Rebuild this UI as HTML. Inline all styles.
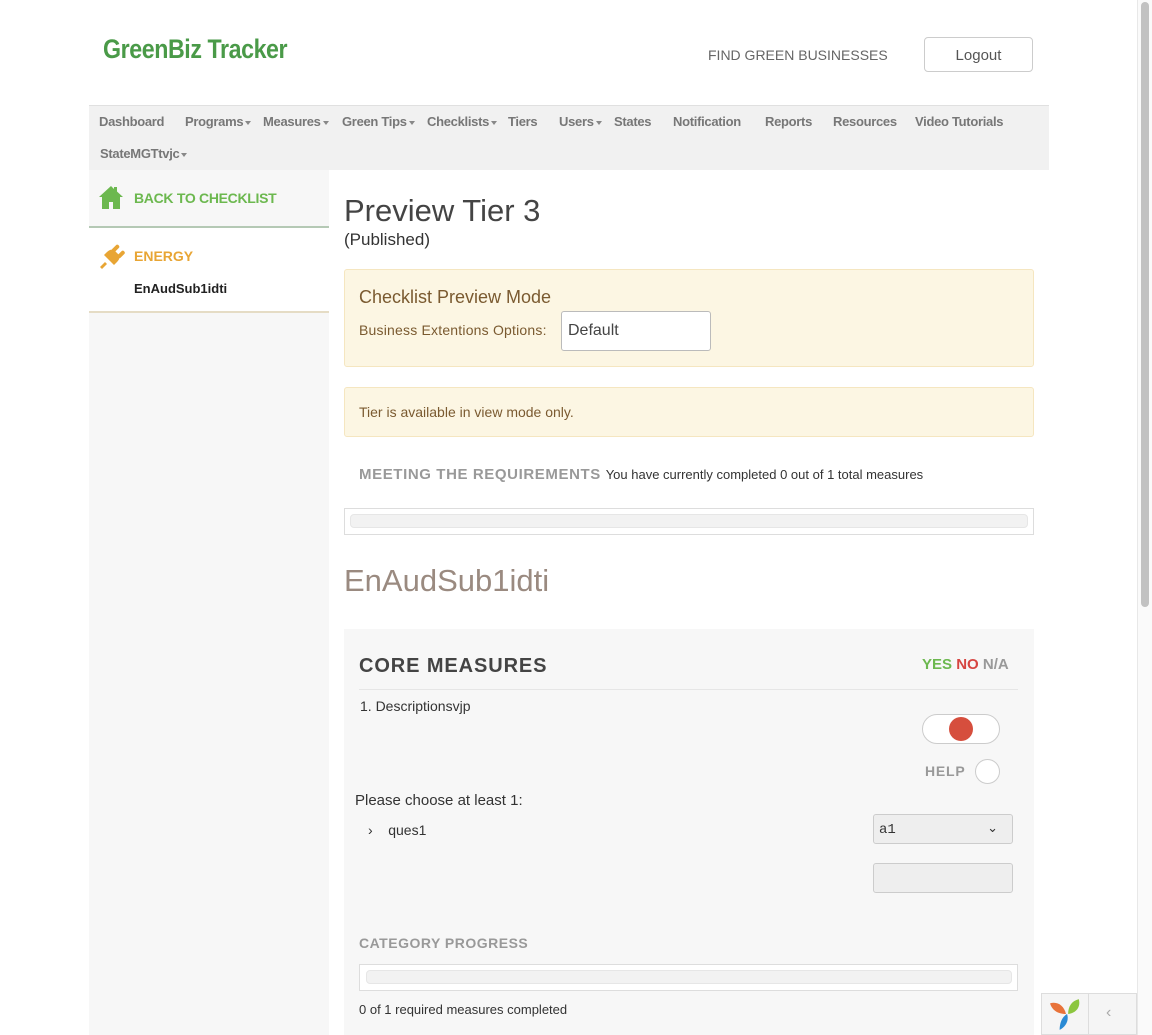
<!DOCTYPE html>
<html><head><meta charset="utf-8"><style>
*{box-sizing:border-box;margin:0;padding:0}
body{width:1152px;height:1035px;overflow:hidden;background:#fff;font-family:"Liberation Sans",sans-serif;position:relative;color:#333}
.a{position:absolute;white-space:nowrap}
.nav{color:#777;font-size:13px;font-weight:bold;letter-spacing:-0.3px}
.car{display:inline-block;border-left:3px solid transparent;border-right:3px solid transparent;border-top:4px solid #888;vertical-align:middle;margin-left:2px}
</style></head><body>
<div class="a" style="left:103px;top:34px;font-size:27px;font-weight:bold;color:#4a9a48;letter-spacing:-0.5px;transform:scaleX(0.86);transform-origin:left">GreenBiz Tracker</div>
<div class="a" style="left:708px;top:47px;font-size:14px;color:#666">FIND GREEN BUSINESSES</div>
<div class="a" style="left:924px;top:37px;width:109px;height:35px;border:1px solid #ccc;border-radius:4px;text-align:center;line-height:35px;font-size:15px;color:#555">Logout</div>

<div class="a" style="left:89px;top:105px;width:960px;height:65px;background:#f1f1f1;border-top:1px solid #e0e0e0"></div>
<div class="a nav" style="left:99px;top:114px">Dashboard</div>
<div class="a nav" style="left:185px;top:114px">Programs<span class="car"></span></div>
<div class="a nav" style="left:263px;top:114px">Measures<span class="car"></span></div>
<div class="a nav" style="left:342px;top:114px">Green Tips<span class="car"></span></div>
<div class="a nav" style="left:427px;top:114px">Checklists<span class="car"></span></div>
<div class="a nav" style="left:508px;top:114px">Tiers</div>
<div class="a nav" style="left:559px;top:114px">Users<span class="car"></span></div>
<div class="a nav" style="left:614px;top:114px">States</div>
<div class="a nav" style="left:673px;top:114px">Notification</div>
<div class="a nav" style="left:765px;top:114px">Reports</div>
<div class="a nav" style="left:833px;top:114px">Resources</div>
<div class="a nav" style="left:915px;top:114px">Video Tutorials</div>
<div class="a nav" style="left:100px;top:146px">StateMGTtvjc<span class="car"></span></div>

<!-- sidebar -->
<div class="a" style="left:89px;top:170px;width:240px;height:865px;background:#f7f7f7"></div>
<div class="a" style="left:89px;top:226px;width:240px;height:87px;background:#fff;border-top:2px solid #b5c9b5;border-bottom:2px solid #e5dcc5"></div>
<svg class="a" style="left:98px;top:185px" width="26" height="25" viewBox="0 0 26 25"><path d="M13 1L1 12h3v12h7v-7h4v7h7V12h3L19 6.5V2h-3v2z" fill="#6cb84f"/></svg>
<div class="a" style="left:134px;top:190px;font-size:14px;font-weight:bold;color:#6cb84f;letter-spacing:-0.3px">BACK TO CHECKLIST</div>
<svg class="a" style="left:98px;top:243px" width="28" height="28" viewBox="0 0 28 28"><g fill="#e8a534"><path d="M2 24l5-5 2 2-5 5z"/><path d="M6 12l10 10 3-3c3-3 3-6 1-8l-3-3c-2-2-5-2-8 1z"/><rect x="15.5" y="1" width="4" height="9" rx="2" transform="rotate(45 17.5 5.5)"/><rect x="21" y="7" width="4" height="9" rx="2" transform="rotate(45 23 11.5)"/></g></svg>
<div class="a" style="left:134px;top:248px;font-size:14px;font-weight:bold;color:#e8a534">ENERGY</div>
<div class="a" style="left:134px;top:281px;font-size:13px;font-weight:bold;color:#222">EnAudSub1idti</div>

<!-- main -->
<div class="a" style="left:344px;top:193px;font-size:31px;color:#444">Preview Tier 3</div>
<div class="a" style="left:344px;top:230px;font-size:17px;color:#333">(Published)</div>
<div class="a" style="left:344px;top:269px;width:690px;height:98px;background:#fcf6e3;border:1px solid #f5e6c0;border-radius:3px"></div>
<div class="a" style="left:359px;top:287px;font-size:18px;color:#7a5a30">Checklist Preview Mode</div>
<div class="a" style="left:359px;top:322px;font-size:14px;color:#7a5a30;letter-spacing:0.2px">Business Extentions Options:</div>
<div class="a" style="left:561px;top:311px;width:150px;height:40px;background:#fff;border:1px solid #bbb;border-radius:3px;font-size:16px;color:#444;padding:10px 6px">Default</div>
<div class="a" style="left:344px;top:387px;width:690px;height:50px;background:#fcf6e3;border:1px solid #f5e6c0;border-radius:3px"></div>
<div class="a" style="left:359px;top:404px;font-size:14px;color:#7a5a30">Tier is available in view mode only.</div>
<div class="a" style="left:359px;top:466px;font-size:15px;font-weight:bold;color:#999;letter-spacing:0.6px">MEETING THE REQUIREMENTS <span style="font-size:13px;font-weight:normal;color:#333;letter-spacing:0">You have currently completed 0 out of 1 total measures</span></div>
<div class="a" style="left:344px;top:508px;width:690px;height:27px;border:1px solid #ddd"></div>
<div class="a" style="left:350px;top:514px;width:678px;height:14px;background:#f2f2f2;border:1px solid #e6e6e6;border-radius:4px"></div>
<div class="a" style="left:344px;top:563px;font-size:31px;color:#9a8a80">EnAudSub1idti</div>

<div class="a" style="left:344px;top:629px;width:690px;height:406px;background:#f7f7f7"></div>
<div class="a" style="left:359px;top:655px;font-size:20px;font-weight:bold;color:#444;letter-spacing:0.9px">CORE MEASURES</div>
<div class="a" style="left:922px;top:656px;font-size:15px;font-weight:bold"><span style="color:#6cb84f">YES</span> <span style="color:#d64541">NO</span> <span style="color:#999">N/A</span></div>
<div class="a" style="left:359px;top:689px;width:659px;height:1px;background:#e6e6e6"></div>
<div class="a" style="left:360px;top:698px;font-size:14px;color:#333">1. Descriptionsvjp</div>
<div class="a" style="left:922px;top:714px;width:78px;height:30px;background:#fff;border:1px solid #ccc;border-radius:15px"></div>
<div class="a" style="left:949px;top:717px;width:24px;height:24px;background:#d64e3d;border-radius:50%"></div>
<div class="a" style="left:925px;top:763px;font-size:14px;font-weight:bold;color:#999;letter-spacing:0.8px">HELP</div>
<div class="a" style="left:975px;top:759px;width:25px;height:25px;background:#fff;border:1px solid #ccc;border-radius:50%"></div>
<div class="a" style="left:355px;top:792px;font-size:15px;color:#333">Please choose at least 1:</div>
<div class="a" style="left:368px;top:822px;font-size:14px;color:#333">›&nbsp;&nbsp;&nbsp;&nbsp;ques1</div>
<div class="a" style="left:873px;top:814px;width:140px;height:30px;background:#eee;border:1px solid #ccc;border-radius:3px;font-family:'Liberation Mono',monospace;font-size:14px;color:#333;padding:7px 5px">a1<span style="position:absolute;right:14px;top:5px;font-family:'Liberation Sans';font-size:13px">⌄</span></div>
<div class="a" style="left:873px;top:863px;width:140px;height:30px;background:#eee;border:1px solid #ccc;border-radius:3px"></div>
<div class="a" style="left:359px;top:935px;font-size:14px;font-weight:bold;color:#999;letter-spacing:0.5px">CATEGORY PROGRESS</div>
<div class="a" style="left:359px;top:964px;width:659px;height:27px;border:1px solid #ddd;background:#fff"></div>
<div class="a" style="left:366px;top:970px;width:646px;height:14px;background:#f2f2f2;border:1px solid #e6e6e6;border-radius:4px"></div>
<div class="a" style="left:359px;top:1002px;font-size:13px;color:#333">0 of 1 required measures completed</div>

<!-- bottom right widget -->
<div class="a" style="left:1041px;top:993px;width:96px;height:42px;border:1px solid #ddd;background:#f5f5f5"></div>
<div class="a" style="left:1088px;top:993px;width:1px;height:42px;background:#ddd"></div>
<svg class="a" style="left:1049px;top:998px" width="34" height="34" viewBox="0 0 32 32"><path d="M1 5c7-2 13 2 15 10-7 0-13-3-15-10z" fill="#e8733a"/><path d="M28 1c2 7-2 13-10 14 0-7 3-12 10-14z" fill="#8cc63f"/><path d="M17 15c2 6-1 12-7 15 0-6 2-12 7-15z" fill="#2a8ad4"/></svg>
<div class="a" style="left:1106px;top:1004px;font-size:16px;color:#aaa">‹</div>

<!-- scrollbar -->
<div class="a" style="left:1137px;top:0;width:15px;height:1035px;background:#fafafa;border-left:1px solid #e8e8e8"></div>
<div class="a" style="left:1141px;top:2px;width:8px;height:605px;background:#c2c2c2;border-radius:4px"></div>
</body></html>
